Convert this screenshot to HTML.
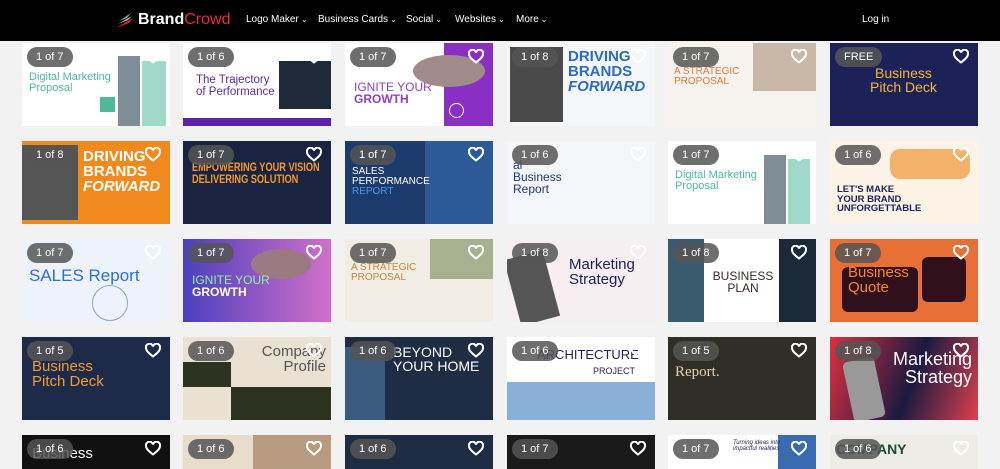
<!DOCTYPE html><html><head><meta charset="utf-8"><style>
*{margin:0;padding:0;box-sizing:border-box}
html,body{width:1000px;height:469px;overflow:hidden}
body{background:#f2f2f2;font-family:"Liberation Sans",sans-serif;position:relative}
.hd{position:absolute;left:0;top:0;width:1000px;height:41px;background:#000;color:#fff}
.logo{position:absolute;left:138px;top:11px;font-size:16px;font-weight:bold;letter-spacing:0}
.nav{position:absolute;top:14px;font-size:10px;white-space:nowrap}
.nav i{font-style:normal;font-size:8px;margin-left:2px}
.c{position:absolute;width:148px;height:83px;overflow:hidden;background:#fff}
.r5{height:34px}
.b{position:absolute;left:5px;top:4px;height:20px;padding:0 9px;border-radius:10px;background:rgba(85,85,85,.85);color:#fff;font-size:11px;line-height:20px;z-index:5}
.h{position:absolute;right:9px;top:6px;width:16px;height:15px;z-index:5}
.t{position:absolute;line-height:1}
.ph{position:absolute}
</style></head><body>
<div class="hd">
<svg style="position:absolute;left:113px;top:12px" width="24" height="17" viewBox="0 0 24 17"><path d="M3 16 L20 6 L16 11 Z" fill="#e8243a"/><path d="M6 9 L18 1 L14 6 Z" fill="#999"/><path d="M5 12 L19 4 L15 8 Z" fill="#ccc"/></svg>
<div class="logo">Brand<span style="color:#ea2b45;font-weight:normal">Crowd</span></div>
<div class="nav" style="left:246px">Logo Maker<i>⌄</i></div>
<div class="nav" style="left:318px">Business Cards<i>⌄</i></div>
<div class="nav" style="left:406px">Social<i>⌄</i></div>
<div class="nav" style="left:455px">Websites<i>⌄</i></div>
<div class="nav" style="left:516px">More<i>⌄</i></div>
<div class="nav" style="left:862px">Log in</div>
</div>

<svg width="0" height="0" style="position:absolute"><defs><symbol id="hh" viewBox="0 0 16 15"><path d="M8 13.5 C3 9.5 1 7.5 1 5 A3.3 3.3 0 0 1 8 3.5 A3.3 3.3 0 0 1 15 5 C15 7.5 13 9.5 8 13.5Z" fill="none" stroke="#fff" stroke-width="2"/></symbol></defs></svg>

<!-- Row 1 -->
<div class="c" style="left:22px;top:43px"><div class="b">1 of 7</div><svg class="h"><use href="#hh"/></svg>
<div class="t" style="left:7px;top:29px;color:#4db89a;font-size:11px">Digital Marketing<br>Proposal</div>
<div class="ph" style="left:96px;top:13px;width:22px;height:70px;background:#7f8e96"></div><div class="ph" style="left:120px;top:18px;width:24px;height:65px;background:#9fd9c7"></div><div class="ph" style="left:78px;top:54px;width:15px;height:15px;background:#4db89a"></div></div>
<div class="c" style="left:183px;top:43px"><div class="b">1 of 6</div><svg class="h"><use href="#hh"/></svg>
<div class="t" style="left:13px;top:32px;color:#5b2a9e;font-size:11.5px">The Trajectory<br>of Performance</div>
<div class="ph" style="left:96px;top:18px;width:52px;height:48px;background:#1e2a3a"></div><div class="ph" style="left:0;top:75px;width:148px;height:8px;background:#5b24a6"></div></div>
<div class="c" style="left:345px;top:43px"><div class="b">1 of 7</div><svg class="h"><use href="#hh"/></svg>
<div class="t" style="left:9px;top:38px;color:#8a3fd0;font-size:12px">IGNITE YOUR<br><b>GROWTH</b></div>
<div class="ph" style="left:99px;top:0;width:49px;height:83px;background:#8a2fc4"></div><div class="ph" style="left:68px;top:12px;width:72px;height:32px;border-radius:50%;background:#a08a8a"></div><div class="ph" style="left:104px;top:60px;width:15px;height:15px;border:1.5px solid #fff;border-radius:50%"></div></div>
<div class="c" style="left:507px;top:43px;background:#f4f6f8"><div class="b">1 of 8</div><svg class="h"><use href="#hh"/></svg>
<div class="ph" style="left:3px;top:4px;width:53px;height:75px;background:#4a4a4a"></div>
<div class="t" style="left:61px;top:6px;color:#2b6cc4;font-size:15px;font-weight:bold">DRIVING<br>BRANDS<br><i>FORWARD</i></div></div>
<div class="c" style="left:668px;top:43px;background:#f6f3ee"><div class="b">1 of 7</div><svg class="h"><use href="#hh"/></svg>
<div class="t" style="left:6px;top:24px;color:#e07a3a;font-size:10px">A STRATEGIC<br>PROPOSAL</div>
<div class="ph" style="left:85px;top:0;width:63px;height:48px;background:#c9b8a8"></div></div>
<div class="c" style="left:830px;top:43px;background:#1c2257"><div class="b">FREE</div><svg class="h"><use href="#hh"/></svg>
<div class="t" style="left:40px;top:23px;color:#f4b63c;font-size:14px;text-align:center">Business<br>Pitch Deck</div></div>

<!-- Row 2 -->
<div class="c" style="left:22px;top:141px;background:#f08a1d"><div class="b">1 of 8</div><svg class="h"><use href="#hh"/></svg>
<div class="ph" style="left:0;top:4px;width:56px;height:75px;background:#555"></div>
<div class="t" style="left:61px;top:8px;color:#fff;font-size:15px;font-weight:bold">DRIVING<br>BRANDS<br><i>FORWARD</i></div></div>
<div class="c" style="left:183px;top:141px;background:#1a2340"><div class="b">1 of 7</div><svg class="h"><use href="#hh"/></svg>
<div class="t" style="left:9px;top:22px;color:#f59a2c;font-size:11.5px;font-weight:bold;white-space:nowrap;transform:scaleX(.8);transform-origin:left">EMPOWERING YOUR VISION<br>DELIVERING SOLUTION</div></div>
<div class="c" style="left:345px;top:141px;background:#1c3a6b"><div class="b">1 of 7</div><svg class="h"><use href="#hh"/></svg>
<div class="ph" style="left:80px;top:0;width:68px;height:83px;background:#2d5a96"></div>
<div class="t" style="left:7px;top:26px;color:#fff;font-size:10px">SALES<br>PERFORMANCE<br><span style="color:#4a9be8">REPORT</span></div></div>
<div class="c" style="left:507px;top:141px;background:#f3f5f8"><div class="b">1 of 6</div><svg class="h"><use href="#hh"/></svg>
<div class="t" style="left:6px;top:18px;color:#203a7a;font-size:12px">al<br>Business<br>Report</div></div>
<div class="c" style="left:668px;top:141px"><div class="b">1 of 7</div><svg class="h"><use href="#hh"/></svg>
<div class="t" style="left:7px;top:29px;color:#4db89a;font-size:11px">Digital Marketing<br>Proposal</div>
<div class="ph" style="left:96px;top:14px;width:22px;height:69px;background:#7f8e96"></div><div class="ph" style="left:120px;top:18px;width:22px;height:65px;background:#9fd9c7"></div></div>
<div class="c" style="left:830px;top:141px;background:#fbf3e6"><div class="b">1 of 6</div><svg class="h"><use href="#hh"/></svg>
<div class="ph" style="left:60px;top:8px;width:80px;height:30px;background:#f2b26a;border-radius:10px"></div>
<div class="t" style="left:7px;top:44px;color:#1c2257;font-size:9.5px;font-weight:bold">LET'S MAKE<br>YOUR BRAND<br>UNFORGETTABLE</div></div>

<!-- Row 3 -->
<div class="c" style="left:22px;top:239px;background:#eef3fb"><div class="b">1 of 7</div><svg class="h"><use href="#hh"/></svg>
<div class="t" style="left:7px;top:28px;color:#2d6fd8;font-size:17px">SALES Report</div>
<div class="ph" style="left:70px;top:46px;width:36px;height:36px;border:1px solid #8ab;border-radius:50%"></div></div>
<div class="c" style="left:183px;top:239px;background:linear-gradient(90deg,#4b3fbf,#d070c8)"><div class="b">1 of 7</div><svg class="h"><use href="#hh"/></svg>
<div class="ph" style="left:68px;top:10px;width:60px;height:30px;border-radius:50%;background:#9a7a80"></div>
<div class="t" style="left:9px;top:35px;color:#8ef2a8;font-size:12px">IGNITE YOUR<br><b style="color:#fff">GROWTH</b></div></div>
<div class="c" style="left:345px;top:239px;background:#f1ece4"><div class="b">1 of 7</div><svg class="h"><use href="#hh"/></svg>
<div class="ph" style="left:85px;top:0;width:63px;height:40px;background:#a8b090"></div>
<div class="t" style="left:6px;top:24px;color:#c08a3a;font-size:10px">A STRATEGIC<br>PROPOSAL</div></div>
<div class="c" style="left:507px;top:239px;background:#f6eef0"><div class="b">1 of 8</div><svg class="h"><use href="#hh"/></svg>
<div class="ph" style="left:5px;top:15px;width:40px;height:68px;background:#555;transform:rotate(-15deg)"></div>
<div class="t" style="left:62px;top:18px;color:#1c2257;font-size:15px">Marketing<br>Strategy</div></div>
<div class="c" style="left:668px;top:239px"><div class="b">1 of 8</div><svg class="h"><use href="#hh"/></svg>
<div class="ph" style="left:0;top:0;width:36px;height:83px;background:#3a5a6e"></div><div class="ph" style="left:111px;top:0;width:37px;height:83px;background:#1a2a38"></div>
<div class="t" style="left:40px;top:31px;color:#3a2a2a;font-size:12px;text-align:center;width:70px">BUSINESS<br>PLAN</div></div>
<div class="c" style="left:830px;top:239px;background:#e86f35"><div class="b">1 of 7</div><svg class="h"><use href="#hh"/></svg>
<div class="ph" style="left:12px;top:28px;width:76px;height:45px;background:#30101a;border-radius:6px"></div><div class="ph" style="left:92px;top:18px;width:44px;height:45px;background:#30101a;border-radius:6px"></div>
<div class="t" style="left:18px;top:26px;color:#f2883a;font-size:15px">Business<br>Quote</div></div>

<!-- Row 4 -->
<div class="c" style="left:22px;top:337px;background:#1e2a4a"><div class="b">1 of 5</div><svg class="h"><use href="#hh"/></svg>
<div class="t" style="left:10px;top:22px;color:#f29a36;font-size:15px">Business<br>Pitch Deck</div></div>
<div class="c" style="left:183px;top:337px;background:#e9e1d2"><div class="b">1 of 6</div><svg class="h"><use href="#hh"/></svg>
<div class="ph" style="left:0;top:25px;width:48px;height:25px;background:#2d3320"></div><div class="ph" style="left:48px;top:50px;width:100px;height:33px;background:#2d3320"></div>
<div class="t" style="left:63px;top:7px;color:#555;font-size:15px;text-align:right;width:80px">Company<br>Profile</div></div>
<div class="c" style="left:345px;top:337px;background:#1e2d44"><div class="b">1 of 6</div><svg class="h"><use href="#hh"/></svg>
<div class="ph" style="left:0;top:10px;width:40px;height:73px;background:#3a5a80"></div>
<div class="t" style="left:48px;top:8px;color:#fff;font-size:14px">BEYOND<br>YOUR HOME</div></div>
<div class="c" style="left:507px;top:337px"><div class="b">1 of 6</div><svg class="h"><use href="#hh"/></svg>
<div class="t" style="left:30px;top:11px;color:#1c2257;font-size:13px">ARCHITECTURE</div><div class="t" style="left:86px;top:30px;color:#1c2257;font-size:9px">PROJECT</div>
<div class="ph" style="left:0;top:45px;width:148px;height:38px;background:#8ab0d8"></div></div>
<div class="c" style="left:668px;top:337px;background:#2f2e27"><div class="b">1 of 5</div><svg class="h"><use href="#hh"/></svg>
<div class="t" style="left:7px;top:28px;color:#e8d2b0;font-size:15px;font-family:'Liberation Serif',serif">Report.</div></div>
<div class="c" style="left:830px;top:337px;background:linear-gradient(110deg,#e03040,#1a1a40 55%,#e04050)"><div class="b">1 of 8</div><svg class="h"><use href="#hh"/></svg>
<div class="ph" style="left:18px;top:22px;width:32px;height:61px;background:#999;border-radius:5px;transform:rotate(-12deg)"></div>
<div class="t" style="left:52px;top:13px;color:#fff;font-size:18px;text-align:right;width:90px">Marketing<br>Strategy</div></div>

<!-- Row 5 -->
<div class="c r5" style="left:22px;top:435px;background:#111"><div class="b">1 of 6</div><svg class="h"><use href="#hh"/></svg><div class="t" style="left:10px;top:11px;color:#fff;font-size:15px">Business</div></div>
<div class="c r5" style="left:183px;top:435px;background:#e8dccb"><div class="b">1 of 6</div><svg class="h"><use href="#hh"/></svg><div class="ph" style="left:70px;top:0;width:78px;height:34px;background:#b89a80"></div></div>
<div class="c r5" style="left:345px;top:435px;background:#1e2d44"><div class="b">1 of 6</div><svg class="h"><use href="#hh"/></svg></div>
<div class="c r5" style="left:507px;top:435px;background:#1a1a1a"><div class="b">1 of 7</div><svg class="h"><use href="#hh"/></svg></div>
<div class="c r5" style="left:668px;top:435px"><div class="b">1 of 7</div><svg class="h"><use href="#hh"/></svg><div class="ph" style="left:110px;top:0;width:38px;height:34px;background:#3a6ab0"></div><div class="t" style="left:65px;top:5px;color:#1c2257;font-size:6px;font-style:italic">Turning ideas into<br>impactful realities</div></div>
<div class="c r5" style="left:830px;top:435px;background:#eeece6"><div class="b">1 of 6</div><svg class="h"><use href="#hh"/></svg><div class="t" style="left:6px;top:7px;color:#1e4a30;font-size:14px;font-weight:bold">COMPANY</div></div>
</body></html>
